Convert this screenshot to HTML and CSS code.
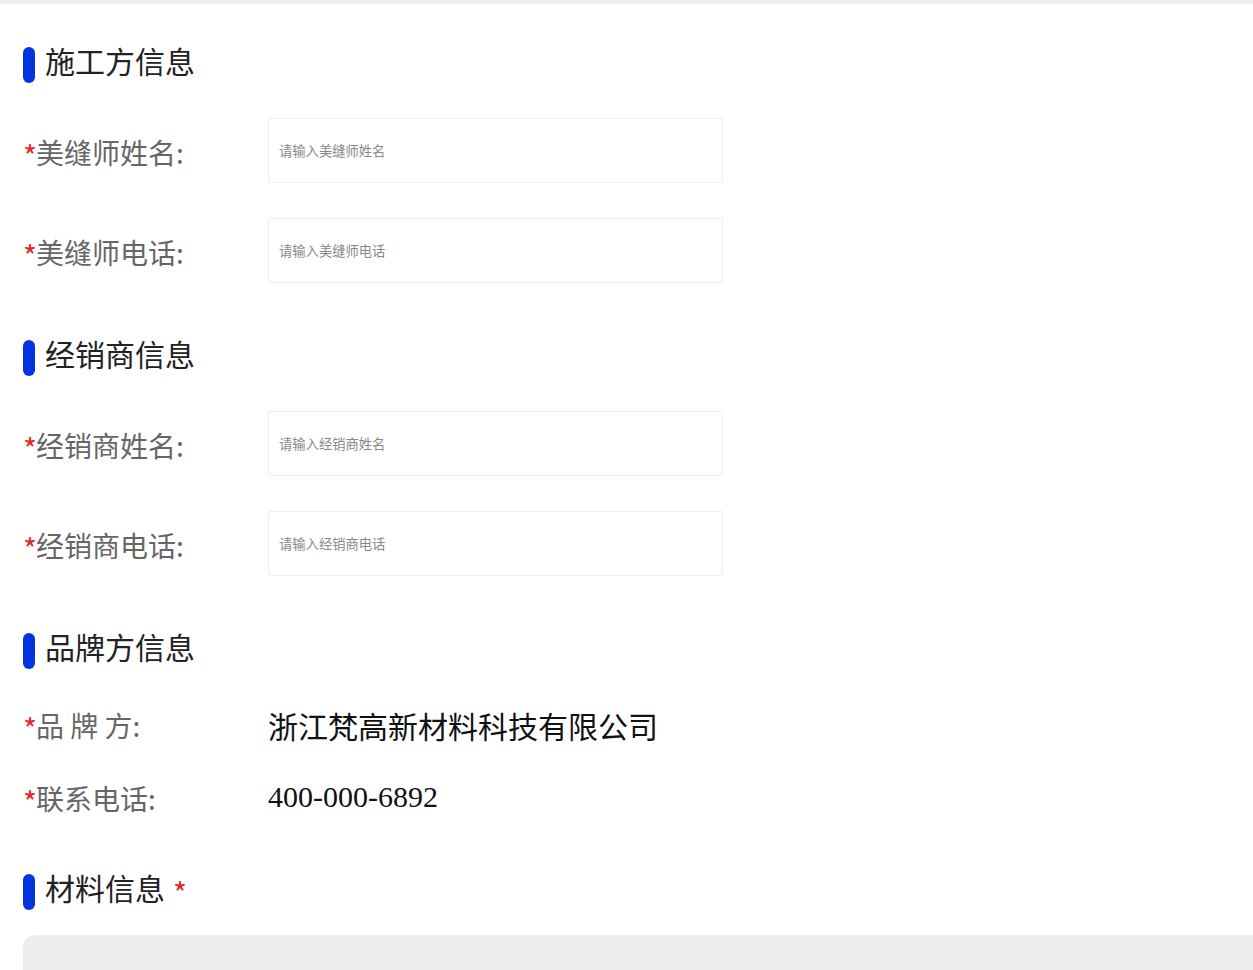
FILE: index.html
```html
<!DOCTYPE html>
<html lang="zh">
<head>
<meta charset="utf-8">
<title>信息</title>
<link rel="stylesheet" href="styles.css">
</head>
<body>
<div class="topbar"></div>
<div class="page">
  <section class="sec sec-first">
    <div class="title"><span class="bar"></span><span class="title-text">施工方信息</span></div>
    <div class="row">
      <label class="label"><span class="star">*</span>美缝师姓名:</label>
      <input class="input" type="text" placeholder="请输入美缝师姓名">
    </div>
    <div class="row">
      <label class="label"><span class="star">*</span>美缝师电话:</label>
      <input class="input" type="text" placeholder="请输入美缝师电话">
    </div>
  </section>
  <section class="sec">
    <div class="title"><span class="bar"></span><span class="title-text">经销商信息</span></div>
    <div class="row">
      <label class="label"><span class="star">*</span>经销商姓名:</label>
      <input class="input" type="text" placeholder="请输入经销商姓名">
    </div>
    <div class="row">
      <label class="label"><span class="star">*</span>经销商电话:</label>
      <input class="input" type="text" placeholder="请输入经销商电话">
    </div>
  </section>
  <section class="sec">
    <div class="title"><span class="bar"></span><span class="title-text">品牌方信息</span></div>
    <div class="row row-text row-brand">
      <span class="label"><span class="star">*</span>品 牌 方:</span>
      <span class="value">浙江梵高新材料科技有限公司</span>
    </div>
    <div class="row row-text">
      <span class="label"><span class="star">*</span>联系电话:</span>
      <span class="value value-num">400-000-6892</span>
    </div>
  </section>
  <section class="sec sec-last">
    <div class="title"><span class="bar"></span><span class="title-text">材料信息</span><span class="title-star">*</span></div>
    <div class="panel"></div>
  </section>
</div>
</body>
</html>
```
FILE: styles.css
```css
html, body {
  margin: 0;
  padding: 0;
  background: #fff;
  overflow: hidden;
}
body {
  font-family: "Noto Sans CJK SC", "Noto Sans", sans-serif;
}
.topbar {
  height: 4px;
  background: #eeeeee;
}
.page {
  padding-left: 23px;
}
.sec {
  margin-top: 57px;
}
.sec-first {
  margin-top: 43px;
}
.title {
  display: flex;
  align-items: flex-start;
  height: 36px;
  margin-bottom: 35px;
}
.bar {
  width: 12px;
  height: 36px;
  border-radius: 6px;
  background: #0433e0;
  flex: none;
}
.title-text {
  margin-left: 10px;
  margin-top: -2px;
  font-size: 30px;
  color: #222;
  line-height: 30px;
}
.title-star {
  margin-left: 8px;
  margin-top: 3px;
  color: #e02a2a;
  font-size: 30px;
  line-height: 30px;
}
.row {
  display: flex;
  align-items: center;
  height: 65px;
  margin-bottom: 35px;
}
.row:last-child {
  margin-bottom: 0;
}
.label {
  width: 245px;
  flex: none;
  font-size: 28px;
  color: #666;
  line-height: 40px;
  white-space: nowrap;
  margin-top: 3px;
}
.star {
  color: #e02a2a;
  font-size: 30px;
  line-height: 0;
  letter-spacing: -1px;
  vertical-align: -4px;
}
.input {
  box-sizing: border-box;
  width: 455px;
  height: 65px;
  border: 1px solid #eeeeee;
  border-radius: 2px;
  padding: 0 10px;
  font-family: "Noto Sans CJK SC", sans-serif;
  font-size: 13.3px;
  color: #333;
  outline: none;
  background: #fff;
}
.input::placeholder {
  color: #888;
}
.row-text {
  height: 50px;
  margin-bottom: 23px;
}
.row-brand {
  margin-top: -4px;
}
.row-text .label {
  margin-top: 0;
}
.value {
  font-size: 30px;
  color: #111;
}
.value-num {
  font-family: "Liberation Serif", serif;
  margin-top: -3px;
}
.sec-last {
  margin-top: 51px;
}
.sec-last .title {
  margin-bottom: 25px;
}
.panel {
  height: 200px;
  background: #eeeeee;
  border-radius: 12px 0 0 0;
}
```
